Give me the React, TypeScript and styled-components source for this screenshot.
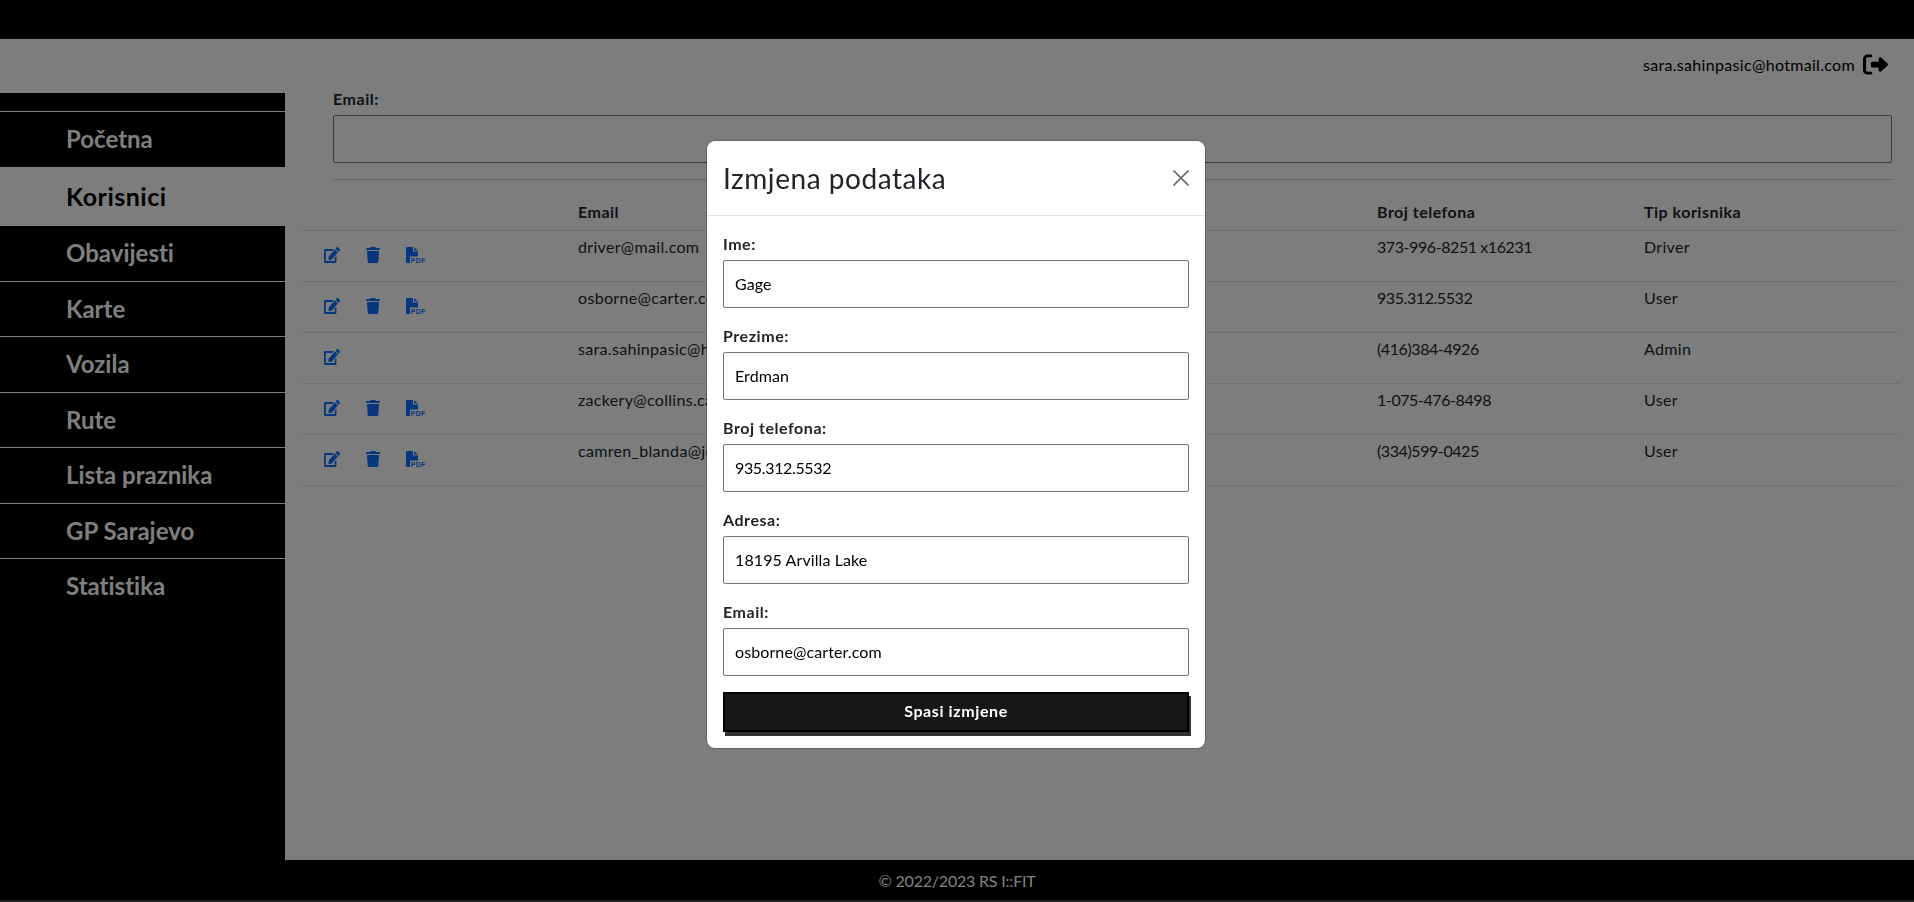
import React from "react";
import styled, { createGlobalStyle } from "styled-components";

const FONT = `"Lato", "Noto Sans", "DejaVu Sans", sans-serif`;

const Global = createGlobalStyle`
  html, body { margin: 0; padding: 0; height: 100%; }
  body { font-family: ${FONT}; background: #fafafa; color: #212529; overflow: hidden; font-variant-ligatures: none; }
  * { box-sizing: border-box; }
`;

const Page = styled.div`
  height: 902px;
  display: flex;
  flex-direction: column;
`;
const TopBar = styled.div`
  height: 39px;
  background: #000;
  flex: none;
`;
const Account = styled.div`
  height: 48px;
  flex: none;
  display: flex;
  align-items: center;
  justify-content: flex-end;
  gap: 8px;
  padding: 6px 26px 0 0;
  font-size: 16px;
  letter-spacing: 0.32px;
  color: #000;
`;
const AccountName = styled.span`
  margin-top: -4px;
`;
const LogoutSlot = styled.span`
  display: block;
  height: 23px;
  margin-top: -4px;
  svg { display: block; }
`;
const Body = styled.div`
  flex: 1;
  display: flex;
  min-height: 0;
`;
const Sidebar = styled.nav`
  width: 285px;
  flex: none;
  background: #000;
  margin-top: 6px;
  padding-top: 18px;
  display: flex;
  flex-direction: column;
`;
const NavItem = styled.div<{ $active?: boolean; $h: number; $line?: boolean }>`
  height: ${(p) => p.$h}px;
  flex: none;
  display: flex;
  align-items: center;
  padding: 0 0 2px 66px;
  font-size: ${(p) => (p.$active ? 25 : 24)}px;
  letter-spacing: ${(p) => (p.$active ? 0.5 : 0)}px;
  font-weight: 700;
  color: ${(p) => (p.$active ? "#000" : "#fff")};
  background: ${(p) => (p.$active ? "#fafafa" : "#000")};
  border-top: ${(p) => (p.$line ? "1px solid #fff" : "none")};
`;
const Main = styled.main`
  flex: 1;
  min-width: 0;
  padding: 0 14px 0 16px;
`;
const Filter = styled.div`
  padding: 0 8px 0 32px;
`;
const FieldLabel = styled.label`
  display: block;
  font-size: 16px;
  font-weight: 700;
  line-height: 24px;
  letter-spacing: 0.55px;
  color: #212529;
  margin-bottom: 4px;
`;
const FilterInput = styled.div`
  height: 48px;
  border: 1px solid #767676;
  border-radius: 2px;
`;
const Rule = styled.hr`
  margin: 16px 8px 0 32px;
  border: 0;
  border-top: 1px solid #c7c8c9;
`;
const Table = styled.div`
  margin-top: 16px;
`;
const Row = styled.div<{ $head?: boolean }>`
  display: grid;
  grid-template-columns: 277px 799px 267px 1fr;
  height: ${(p) => (p.$head ? 35 : 51)}px;
  border-bottom: 1px solid #dee2e6;
  font-size: 16px;
  font-weight: ${(p) => (p.$head ? 700 : 400)};
  letter-spacing: ${(p) => (p.$head ? 0.5 : 0.32)}px;
  color: #212529;
`;
const Cell = styled.div<{ $tight?: boolean }>`
  padding: 7px 0 0 0;
  line-height: 18px;
  white-space: nowrap;
  overflow: hidden;
  letter-spacing: ${(p) => (p.$tight ? "-0.42px" : "inherit")};
`;
const Actions = styled.div`
  display: flex;
  align-items: flex-start;
  padding: 16px 0 0 23px;
  gap: 26px;
`;
const IconSlot = styled.span`
  height: 16px;
  flex: none;
  display: block;
  color: #0d6efd;
  svg { display: block; }
`;
const Footer = styled.footer`
  height: 42px;
  flex: none;
  background: #000;
  color: #fff;
  font-size: 16px;
  letter-spacing: -0.2px;
  display: flex;
  align-items: center;
  justify-content: center;
  border-bottom: 2px solid #444;
`;
const Overlay = styled.div`
  position: fixed;
  inset: 0;
  background: rgba(0, 0, 0, 0.5);
`;
const Modal = styled.div`
  position: fixed;
  left: 707px;
  top: 141px;
  width: 498px;
  height: 607px;
  background: #fff;
  border-radius: 8px;
  box-shadow: 0 0 0 1px rgba(0, 0, 0, 0.2);
  display: flex;
  flex-direction: column;
`;
const ModalHeader = styled.div`
  height: 75px;
  flex: none;
  border-bottom: 1px solid #dee2e6;
  padding: 0 16px;
  display: flex;
  align-items: center;
  justify-content: space-between;
`;
const ModalTitle = styled.h5`
  margin: 0;
  font-size: 28px;
  font-weight: 400;
  letter-spacing: 0.55px;
  color: #212529;
`;
const Close = styled.span`
  width: 16px;
  height: 16px;
  color: #6c6c6c;
  display: block;
  svg { display: block; }
`;
const ModalBody = styled.div`
  padding: 16px 16px 0;
`;
const Field = styled.div`
  height: 92px;
`;
const Input = styled.div<{ $tight?: boolean }>`
  height: 48px;
  border: 1px solid #767676;
  border-radius: 2px;
  padding: 0 11px 2px;
  display: flex;
  align-items: center;
  font-size: 16px;
  letter-spacing: ${(p) => (p.$tight ? "-0.35px" : "0.1px")};
  color: #000;
`;
const Save = styled.div`
  height: 40px;
  background: #171717;
  border: 2px solid #000;
  box-shadow: 2px 4px 0 #333;
  color: #fff;
  font-size: 16px;
  font-weight: 700;
  letter-spacing: 0.6px;
  padding-bottom: 3px;
  display: flex;
  align-items: center;
  justify-content: center;
`;

const EditIcon = () => (
  <svg viewBox="0 0 576 512" width="16" height="16" fill="currentColor" preserveAspectRatio="none">
    <path d="M402.6 83.2l90.2 90.2c3.8 3.8 3.8 10 0 13.8L274.4 405.6l-92.8 10.3c-12.4 1.4-22.9-9.1-21.5-21.5l10.3-92.8L388.8 83.2c3.8-3.8 10-3.8 13.8 0zm162-22.9l-48.8-48.8c-15.2-15.2-39.9-15.2-55.2 0l-35.4 35.4c-3.8 3.8-3.8 10 0 13.8l90.2 90.2c3.8 3.8 10 3.8 13.8 0l35.4-35.4c15.2-15.3 15.2-40 0-55.2zM384 346.2V448H64V128h229.8c3.2 0 6.2-1.3 8.5-3.5l40-40c7.6-7.6 2.2-20.5-8.5-20.5H48C21.5 64 0 85.5 0 112v352c0 26.5 21.5 48 48 48h352c26.5 0 48-21.5 48-48V306.2c0-10.7-12.9-16-20.5-8.5l-40 40c-2.2 2.3-3.5 5.3-3.5 8.5z" />
  </svg>
);
const TrashIcon = () => (
  <svg viewBox="0 0 448 512" width="14" height="16" fill="currentColor">
    <path d="M135.2 17.7L128 32H32C14.3 32 0 46.3 0 64s14.3 32 32 32h384c17.7 0 32-14.3 32-32s-14.3-32-32-32h-96l-7.2-14.3C307.4 6.8 296.3 0 284.2 0H163.8c-12.1 0-23.2 6.8-28.6 17.7zM416 128H32l21.2 339c1.6 25.3 22.6 45 47.9 45h245.8c25.3 0 46.3-19.7 47.9-45L416 128z" />
  </svg>
);
const PdfIcon = () => (
  <svg viewBox="0 0 22 16" width="22" height="16" fill="currentColor">
    <path d="M0 0h7v4.6h5V9.4H4V16H1C.4 16 0 15.6 0 15V0zM8.2.2 12 3.6H8.2z" />
    <text x="4.8" y="15.8" fontSize="6.8" fontWeight="700" fontFamily="'Liberation Sans', sans-serif" letterSpacing="0.4">PDF</text>
  </svg>
);
const LogoutIcon = () => (
  <svg viewBox="0 0 512 512" width="25" height="23" fill="#000" preserveAspectRatio="none">
    <path d="M502.6 278.6c12.5-12.5 12.5-32.8 0-45.3l-128-128c-9.2-9.2-22.9-11.9-34.9-6.9S320 115 320 128v64H192c-17.7 0-32 14.3-32 32v64c0 17.7 14.3 32 32 32h128v64c0 12.9 7.8 24.6 19.8 29.6s25.7 2.2 34.9-6.9l128-128zM160 96c17.7 0 32-14.3 32-32s-14.3-32-32-32H96C43 32 0 75 0 128v256c0 53 43 96 96 96h64c17.7 0 32-14.3 32-32s-14.3-32-32-32H96c-17.7 0-32-14.3-32-32V128c0-17.7 14.3-32 32-32h64z" />
  </svg>
);
const CloseIcon = () => (
  <svg viewBox="0 0 16 16" width="16" height="16" stroke="currentColor" strokeWidth="1.7" fill="none">
    <path d="M.5.5l15 15M15.5.5l-15 15" />
  </svg>
);

const users = [
  { email: "driver@mail.com", phone: "373-996-8251 x16231", type: "Driver", del: true },
  { email: "osborne@carter.com", phone: "935.312.5532", type: "User", del: true },
  { email: "sara.sahinpasic@hotmail.com", phone: "(416)384-4926", type: "Admin", del: false },
  { email: "zackery@collins.ca", phone: "1-075-476-8498", type: "User", del: true },
  { email: "camren_blanda@jones.org", phone: "(334)599-0425", type: "User", del: true },
];

const nav = [
  { t: "Početna", h: 56, line: true },
  { t: "Korisnici", h: 59, active: true },
  { t: "Obavijesti", h: 55 },
  { t: "Karte", h: 55, line: true },
  { t: "Vozila", h: 56, line: true },
  { t: "Rute", h: 55, line: true },
  { t: "Lista praznika", h: 56, line: true },
  { t: "GP Sarajevo", h: 55, line: true },
  { t: "Statistika", h: 55, line: true },
];

const fields = [
  { l: "Ime:", v: "Gage" },
  { l: "Prezime:", v: "Erdman" },
  { l: "Broj telefona:", v: "935.312.5532", tight: true },
  { l: "Adresa:", v: "18195 Arvilla Lake" },
  { l: "Email:", v: "osborne@carter.com" },
];

export default function App() {
  return (
    <Page>
      <Global />
      <TopBar />
      <Account>
        <AccountName>sara.sahinpasic@hotmail.com</AccountName>
        <LogoutSlot><LogoutIcon /></LogoutSlot>
      </Account>
      <Body>
        <Sidebar>
          {nav.map((n) => (
            <NavItem key={n.t} $active={n.active} $h={n.h} $line={n.line}>
              {n.t}
            </NavItem>
          ))}
        </Sidebar>
        <Main>
          <Filter>
            <FieldLabel>Email:</FieldLabel>
            <FilterInput />
          </Filter>
          <Rule />
          <Table>
            <Row $head>
              <Cell />
              <Cell>Email</Cell>
              <Cell>Broj telefona</Cell>
              <Cell>Tip korisnika</Cell>
            </Row>
            {users.map((u) => (
              <Row key={u.email}>
                <Actions>
                  <IconSlot><EditIcon /></IconSlot>
                  {u.del && <IconSlot><TrashIcon /></IconSlot>}
                  {u.del && <IconSlot><PdfIcon /></IconSlot>}
                </Actions>
                <Cell>{u.email}</Cell>
                <Cell $tight>{u.phone}</Cell>
                <Cell>{u.type}</Cell>
              </Row>
            ))}
          </Table>
        </Main>
      </Body>
      <Footer>© 2022/2023 RS I::FIT</Footer>
      <Overlay />
      <Modal>
        <ModalHeader>
          <ModalTitle>Izmjena podataka</ModalTitle>
          <Close><CloseIcon /></Close>
        </ModalHeader>
        <ModalBody>
          {fields.map((f) => (
            <Field key={f.l}>
              <FieldLabel>{f.l}</FieldLabel>
              <Input $tight={f.tight}>{f.v}</Input>
            </Field>
          ))}
          <Save>Spasi izmjene</Save>
        </ModalBody>
      </Modal>
    </Page>
  );
}
